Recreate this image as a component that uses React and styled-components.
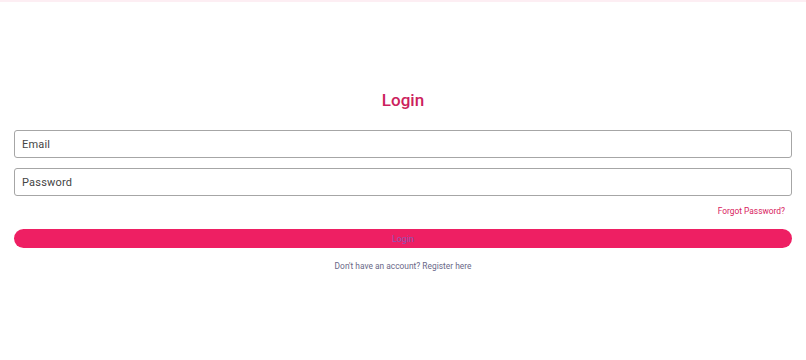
import styled, { createGlobalStyle } from "styled-components";

const GlobalStyle = createGlobalStyle`
  * { box-sizing: border-box; }
  body {
    margin: 0;
    font-family: Roboto, "Liberation Sans", sans-serif;
    background: #fff;
  }
`;

const TopBar = styled.div`
  height: 2px;
  background: #fdeef3;
`;

const Page = styled.main`
  padding: 88px 14px 0;
`;

const Title = styled.h2`
  margin: 0 0 20px;
  text-align: center;
  font-size: 17px;
  font-weight: 500;
  color: #cc1f5e;
`;

const Form = styled.form`
  display: flex;
  flex-direction: column;
`;

const Input = styled.input`
  height: 28px;
  width: 100%;
  padding: 0 7px;
  margin-bottom: 10px;
  border: 1px solid #a6a6a6;
  border-radius: 3px;
  font-family: Roboto, "Liberation Sans", sans-serif;
  font-size: 11px;
  color: #444;
  outline: none;

  &::placeholder {
    color: #444;
    letter-spacing: 0.2px;
  }
`;

const LinkRow = styled.div`
  display: flex;
  justify-content: flex-end;
  padding: 0 7px 0 0;
  margin: 0 0 13px;
`;

const SmallLink = styled.a`
  font-size: 8.4px;
  color: ${({ $muted }) => ($muted ? "#6a6888" : "#d81b60")};
  text-decoration: none;
  cursor: pointer;
`;

const Submit = styled.button`
  height: 19px;
  width: 100%;
  border: none;
  border-radius: 10px;
  background: #ee1f63;
  color: #8e55b4;
  font-family: Roboto, "Liberation Sans", sans-serif;
  font-size: 9px;
  cursor: pointer;
`;

const Footer = styled.p`
  margin: 10px 0 0;
  text-align: center;
  line-height: 12px;
`;

export default function App() {
  return (
    <>
      <GlobalStyle />
      <TopBar />
      <Page>
        <Title>Login</Title>
        <Form onSubmit={(e) => e.preventDefault()}>
          <Input type="email" placeholder="Email" />
          <Input type="password" placeholder="Password" />
          <LinkRow>
            <SmallLink>Forgot Password?</SmallLink>
          </LinkRow>
          <Submit type="submit">Login</Submit>
        </Form>
        <Footer>
          <SmallLink $muted>Don't have an account? Register here</SmallLink>
        </Footer>
      </Page>
    </>
  );
}
